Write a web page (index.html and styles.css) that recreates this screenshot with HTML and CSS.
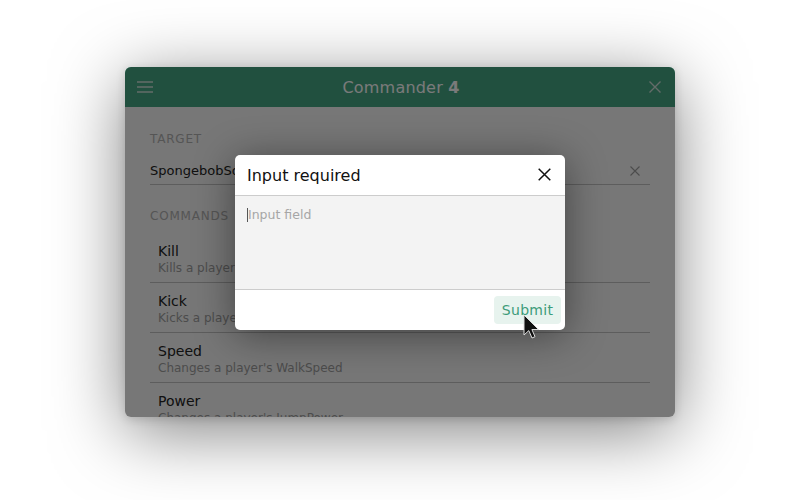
FILE: index.html
```html
<!DOCTYPE html>
<html lang="en">
<head>
<meta charset="utf-8">
<title>Commander 4</title>
<link rel="stylesheet" href="styles.css">
</head>
<body>
<div class="stage">
  <div class="window">
    <header class="titlebar">
      <svg class="icon menu" width="16" height="12" viewBox="0 0 16 12"><path d="M0 1h16M0 6h16M0 11h16" stroke="currentColor" stroke-width="1.6"/></svg>
      <div class="title">Commander <b>4</b></div>
      <svg class="icon close" width="12" height="12" viewBox="0 0 12 12"><path d="M0.5 0.5l11 11M11.5 0.5l-11 11" stroke="currentColor" stroke-width="1.4"/></svg>
    </header>
    <main class="content">
      <div class="label">Target</div>
      <div class="target">
        <span class="target-name">SpongebobSquarePants</span>
        <svg class="clear" width="10" height="10" viewBox="0 0 10 10"><path d="M0.5 0.5l9 9M9.5 0.5l-9 9" stroke="currentColor" stroke-width="1.1"/></svg>
      </div>
      <div class="label commands-label">Commands</div>
      <ul class="commands">
        <li class="cmd"><div class="cmd-name">Kill</div><div class="cmd-desc">Kills a player</div></li>
        <li class="cmd"><div class="cmd-name">Kick</div><div class="cmd-desc">Kicks a player</div></li>
        <li class="cmd"><div class="cmd-name">Speed</div><div class="cmd-desc">Changes a player's WalkSpeed</div></li>
        <li class="cmd"><div class="cmd-name">Power</div><div class="cmd-desc">Changes a player's JumpPower</div></li>
      </ul>
    </main>
    <div class="overlay">
      <div class="modal">
        <div class="modal-head">
          <span class="modal-title">Input required</span>
          <svg class="modal-close" width="13" height="13" viewBox="0 0 13 13"><path d="M0.7 0.7l11.6 11.6M12.3 0.7l-11.6 11.6" stroke="currentColor" stroke-width="1.5"/></svg>
        </div>
        <div class="modal-body">
          <span class="caret"></span><span class="placeholder">Input field</span>
        </div>
        <div class="modal-foot">
          <button class="submit">Submit</button>
        </div>
      </div>
    </div>
    <svg class="pointer" width="20" height="26" viewBox="0 0 20 26"><path d="M1 1 L1 21 L5.8 16.6 L9 24 L12 22.7 L8.9 15.5 L15.5 15.5 Z" fill="#111" stroke="#ddd" stroke-width="1" stroke-linejoin="round"/></svg>
  </div>
</div>
</body>
</html>
```
FILE: styles.css
```css
* { box-sizing: border-box; }
html, body { margin: 0; padding: 0; background: #ffffff; }
body { font-family: "DejaVu Sans", "Liberation Sans", sans-serif; width: 800px; height: 500px; overflow: hidden; }

.stage { padding-top: 67px; display: flex; justify-content: center; }

.window {
  position: relative;
  width: 550px;
  height: 350px;
  border-radius: 6px;
  overflow: hidden;
  background: #eeeeee;
  box-shadow: 0 14px 70px rgba(0,0,0,0.5), 0 2px 10px rgba(0,0,0,0.15);
}

.titlebar {
  height: 40px;
  background: #42a07f;
  display: flex;
  align-items: center;
  padding: 0 14px 0 12px;
  color: #f2f2f2;
}
.icon { display: block; flex: none; }
.menu { color: #c8d8d2; }
.title { flex: 1; text-align: center; font-size: 16px; color: #f4f4f4; letter-spacing: 0.2px; }
.title b { font-weight: bold; }
.close { color: #c8d8d2; }

.content { padding: 24px 25px 0 25px; }
.label {
  font-size: 12px;
  line-height: 16px;
  text-transform: uppercase;
  letter-spacing: 0.8px;
  color: #aaaaaa;
}
.target {
  margin-top: 10px;
  height: 28px;
  border-bottom: 1px solid #bbbbbb;
  display: flex;
  align-items: center;
  justify-content: space-between;
  padding-right: 10px;
}
.target-name { font-size: 13px; color: #222; }
.clear { color: #999; }
.commands-label { margin-top: 23px; }

.commands { list-style: none; margin: 9px 0 0 0; padding: 0; }
.cmd { padding: 9px 8px 6px 8px; border-bottom: 1px solid #bbbbbb; }
.cmd-name { font-size: 14px; line-height: 18px; color: #222; }
.cmd-desc { font-size: 12px; line-height: 16px; color: #999; }

.overlay {
  position: absolute;
  inset: 0;
  background: rgba(0,0,0,0.5);
  display: flex;
  align-items: center;
  justify-content: center;
}

.modal {
  width: 330px;
  height: 175px;
  background: #fff;
  border-radius: 5px;
  overflow: hidden;
  display: flex;
  flex-direction: column;
  box-shadow: 0 5px 40px rgba(0,0,0,0.45);
}
.modal-head {
  height: 41px;
  flex: none;
  border-bottom: 1px solid #cccccc;
  display: flex;
  align-items: center;
  justify-content: space-between;
  padding: 2px 14px 0 12px;
}
.modal-title { font-size: 16px; color: #111; }
.modal-close { color: #111; margin-top: -2px; }
.modal-body {
  flex: 1;
  background: #f3f3f3;
  border-bottom: 1px solid #cccccc;
  padding: 11px 12px;
  display: flex;
  align-items: flex-start;
}
.caret { width: 1px; height: 14px; background: #555; margin-top: 1px; }
.placeholder { font-size: 12.5px; line-height: 16px; color: #a6a6a6; }
.modal-foot {
  height: 40px;
  flex: none;
  display: flex;
  justify-content: flex-end;
  align-items: flex-start;
  padding: 6px 4px 0 0;
}
.submit {
  font-family: inherit;
  font-size: 14px;
  line-height: 28px;
  color: #3d9c7a;
  background: #e7f3ee;
  border: none;
  border-radius: 4px;
  height: 28px;
  width: 67px;
  padding: 0;
  letter-spacing: 0.3px;
}

.pointer { position: absolute; left: 398px; top: 247px; }
```
